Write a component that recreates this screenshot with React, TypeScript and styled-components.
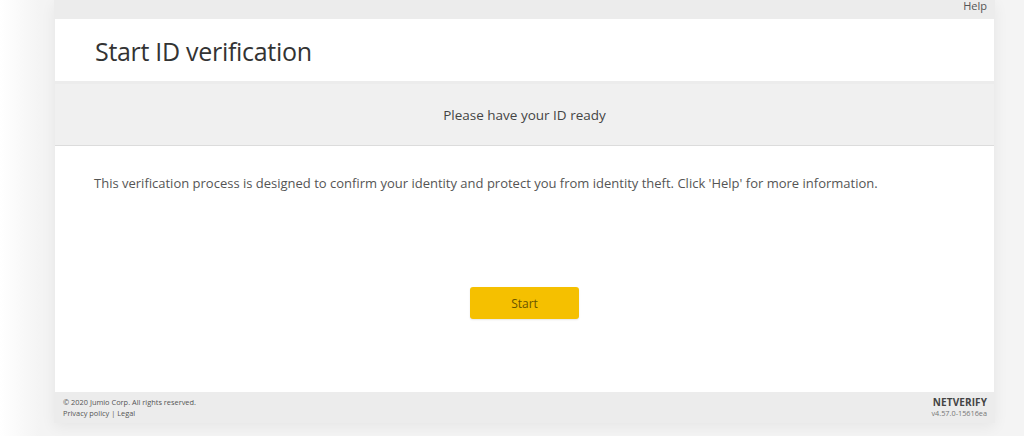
import React from "react";
import styled, { createGlobalStyle } from "styled-components";

const Global = createGlobalStyle`
  html, body { margin: 0; padding: 0; }
  body {
    background: linear-gradient(90deg, #ffffff 0px, #f4f4f4 40px, #f4f4f4 100%);
    font-family: "Open Sans", "Noto Sans", Arial, sans-serif;
    height: 436px;
    overflow: hidden;
  }
`;

const Page = styled.div`
  display: flex;
  padding-left: 54px;
  width: 1024px;
  box-sizing: border-box;
`;

const Frame = styled.div`
  width: 941px;
  background: #ececec;
  box-shadow: 0 4px 14px rgba(0, 0, 0, 0.06);
  display: flex;
  flex-direction: column;
`;

const TopBar = styled.div`
  height: 19px;
  display: flex;
  justify-content: flex-end;
  align-items: flex-start;
  padding-right: 8px;
`;

const HelpLink = styled.a`
  font-size: 11px;
  line-height: 11px;
  color: #555;
  text-decoration: none;
`;

const Header = styled.div`
  background: #fff;
  height: 62px;
  display: flex;
  align-items: center;
  padding-left: 40px;
  margin: 0 1px;
`;

const Title = styled.h1`
  margin: 0;
  font-weight: 400;
  font-size: 25px;
  color: #333;
  letter-spacing: -0.3px;
  padding-top: 2px;
`;

const Band = styled.div`
  margin: 3px 1px 0;
  height: 61px;
  background: #f0f0f0;
  border-bottom: 1px solid #dcdcdc;
  display: flex;
  align-items: center;
  justify-content: center;
  font-size: 13.5px;
  color: #444;
`;

const Body = styled.div`
  margin: 0 1px;
  background: #fff;
  height: 246px;
  display: flex;
  flex-direction: column;
  padding: 28px 0 0 39px;
  box-sizing: border-box;
`;

const Paragraph = styled.p`
  margin: 0;
  font-size: 13px;
  color: #555;
`;

const ButtonRow = styled.div`
  display: flex;
  justify-content: center;
  margin-top: 95px;
  padding-right: 39px;
`;

const StartButton = styled.button`
  width: 109px;
  height: 32px;
  background: #f5c000;
  border: none;
  border-radius: 3px;
  font-family: inherit;
  font-size: 12px;
  color: #6a5400;
  cursor: pointer;
  box-shadow: 0 1px 2px rgba(0, 0, 0, 0.1);
`;

const Footer = styled.div`
  height: 31px;
  display: flex;
  justify-content: space-between;
  align-items: flex-start;
  padding: 5px 8px 0 9px;
  box-sizing: border-box;
`;

const FooterLeft = styled.div`
  display: flex;
  flex-direction: column;
  font-size: 7.4px;
  line-height: 11px;
  color: #555;
`;

const FooterRight = styled.div`
  display: flex;
  flex-direction: column;
  align-items: flex-end;
  color: #555;
`;

const Brand = styled.span`
  font-size: 10px;
  font-weight: 700;
  line-height: 11px;
  color: #444;
  letter-spacing: 0.1px;
`;

const Version = styled.span`
  font-size: 7.3px;
  line-height: 10px;
  color: #777;
`;

export default function App() {
  return (
    <>
      <Global />
      <Page>
        <Frame>
          <TopBar>
            <HelpLink>Help</HelpLink>
          </TopBar>
          <Header>
            <Title>Start ID verification</Title>
          </Header>
          <Band>Please have your ID ready</Band>
          <Body>
            <Paragraph>
              This verification process is designed to confirm your identity and protect you from identity theft. Click 'Help' for more information.
            </Paragraph>
            <ButtonRow>
              <StartButton>Start</StartButton>
            </ButtonRow>
          </Body>
          <Footer>
            <FooterLeft>
              <span>© 2020 Jumio Corp. All rights reserved.</span>
              <span>Privacy policy | Legal</span>
            </FooterLeft>
            <FooterRight>
              <Brand>NETVERIFY</Brand>
              <Version>v4.57.0-15616ea</Version>
            </FooterRight>
          </Footer>
        </Frame>
      </Page>
    </>
  );
}
